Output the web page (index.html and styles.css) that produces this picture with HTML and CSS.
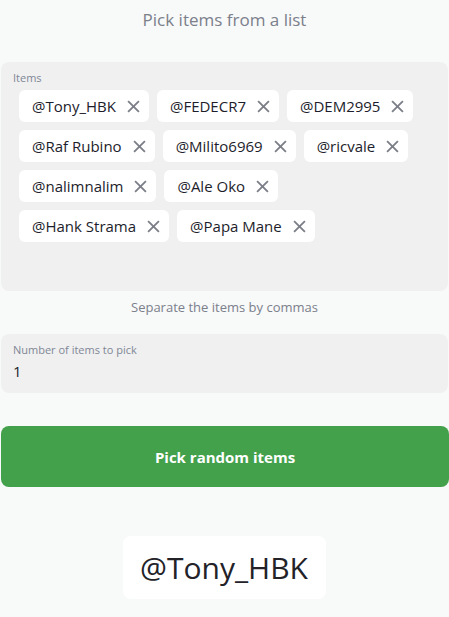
FILE: index.html
```html
<!DOCTYPE html>
<html lang="en">
<head>
<meta charset="utf-8">
<title>Pick items from a list</title>
<link rel="stylesheet" href="styles.css">
</head>
<body>
<main class="page">
  <h1 class="title">Pick items from a list</h1>

  <section class="field items-field">
    <label class="field-label">Items</label>
    <div class="chips">
      <span class="chip">@Tony_HBK<span class="chip-x"><svg viewBox="0 0 12 12"><path d="M1 1L11 11M11 1L1 11"/></svg></span></span>
      <span class="chip">@FEDECR7<span class="chip-x"><svg viewBox="0 0 12 12"><path d="M1 1L11 11M11 1L1 11"/></svg></span></span>
      <span class="chip">@DEM2995<span class="chip-x"><svg viewBox="0 0 12 12"><path d="M1 1L11 11M11 1L1 11"/></svg></span></span>
      <span class="chip">@Raf Rubino<span class="chip-x"><svg viewBox="0 0 12 12"><path d="M1 1L11 11M11 1L1 11"/></svg></span></span>
      <span class="chip">@Milito6969<span class="chip-x"><svg viewBox="0 0 12 12"><path d="M1 1L11 11M11 1L1 11"/></svg></span></span>
      <span class="chip">@ricvale<span class="chip-x"><svg viewBox="0 0 12 12"><path d="M1 1L11 11M11 1L1 11"/></svg></span></span>
      <span class="chip">@nalimnalim<span class="chip-x"><svg viewBox="0 0 12 12"><path d="M1 1L11 11M11 1L1 11"/></svg></span></span>
      <span class="chip">@Ale Oko<span class="chip-x"><svg viewBox="0 0 12 12"><path d="M1 1L11 11M11 1L1 11"/></svg></span></span>
      <span class="chip">@Hank Strama<span class="chip-x"><svg viewBox="0 0 12 12"><path d="M1 1L11 11M11 1L1 11"/></svg></span></span>
      <span class="chip">@Papa Mane<span class="chip-x"><svg viewBox="0 0 12 12"><path d="M1 1L11 11M11 1L1 11"/></svg></span></span>
    </div>
  </section>
  <p class="helper">Separate the items by commas</p>

  <section class="field number-field">
    <label class="field-label">Number of items to pick</label>
    <div class="field-value">1</div>
  </section>

  <button class="pick-btn">Pick random items</button>

  <div class="result-wrap">
    <div class="result">@Tony_HBK</div>
  </div>
</main>
</body>
</html>
```

FILE: styles.css
```css
* { box-sizing: border-box; }
html, body { margin: 0; padding: 0; }
body {
  background: #f8f9f9;
  font-family: "Open Sans", "Lato", sans-serif;
  color: #1d1d2b;
}
.page {
  padding: 0 1px 0 1px;
  width: 449px;
}
.title {
  margin: 0;
  padding-top: 8px;
  height: 62px;
  text-align: center;
  font-size: 17px;
  line-height: 24px;
  font-weight: 400;
  color: #7b808b;
}
.field {
  background: #f0f0f0;
  border-radius: 8px;
  width: 447px;
}
.items-field {
  height: 229px;
  padding: 9px 20px 0 18px;
}
.field-label {
  display: block;
  font-size: 11px;
  color: #7f8796;
  margin-left: -6px;
  line-height: 13px;
}
.chips {
  display: flex;
  flex-wrap: wrap;
  gap: 8px 8px;
  margin-top: 6px;
}
.chip {
  display: inline-flex;
  align-items: center;
  height: 32px;
  padding: 0 9px 0 13px;
  background: #ffffff;
  border-radius: 6px;
  font-size: 15px;
  color: #1d1d2b;
  white-space: nowrap;
}
.chip-x {
  display: inline-flex;
  margin-left: 11px;
  width: 13px;
  height: 13px;
}
.chip-x svg {
  width: 13px;
  height: 13px;
  fill: none;
  stroke: #7c7f88;
  stroke-width: 1.7;
}
.helper {
  margin: 0;
  height: 43px;
  padding-top: 7px;
  text-align: center;
  font-size: 13px;
  line-height: 18px;
  color: #7b808b;
}
.number-field {
  height: 59px;
  padding: 9px 12px 0 12px;
}
.number-field .field-label { margin-left: 0; }
.field-value {
  font-size: 15px;
  line-height: 20px;
  margin-top: 5px;
  color: #1d1d2b;
}
.pick-btn {
  display: block;
  margin-top: 33px;
  width: 448px;
  height: 61px;
  border: none;
  border-radius: 8px;
  background: #43a04b;
  color: #ffffff;
  font-family: inherit;
  font-size: 15px;
  font-weight: 700;
}
.result-wrap {
  display: flex;
  justify-content: center;
  padding-top: 49px;
  padding-right: 1px;
}
.result {
  background: #ffffff;
  border-radius: 8px;
  width: 203px;
  height: 63px;
  display: flex;
  align-items: center;
  justify-content: center;
  font-size: 30px;
  color: #222228;
}
```
